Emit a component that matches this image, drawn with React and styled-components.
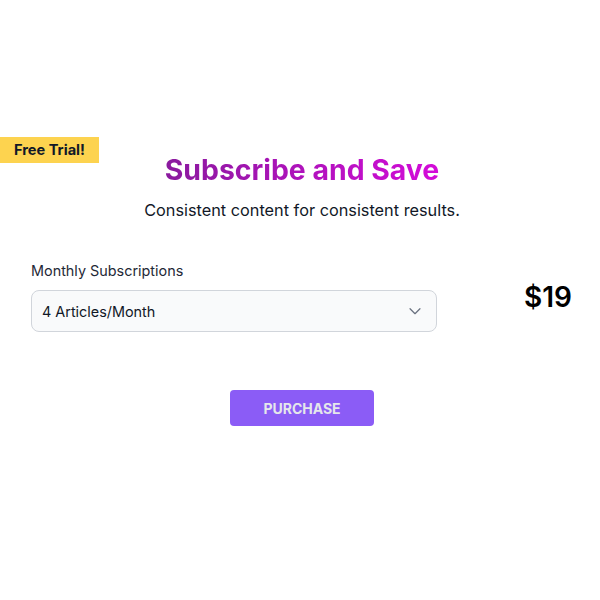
import styled, { createGlobalStyle } from "styled-components";

const GlobalStyle = createGlobalStyle`
  body {
    margin: 0;
    background: #ffffff;
    font-family: Inter, "Noto Sans", sans-serif;
  }
`;

const Page = styled.div`
  width: 600px;
  height: 600px;
  box-sizing: border-box;
  padding-top: 137px;
  position: relative;
`;

const Badge = styled.div`
  position: absolute;
  top: 137px;
  left: 0;
  width: 99px;
  height: 26px;
  background: #fdd34f;
  color: #111827;
  font-size: 14.6px;
  font-weight: 700;
  display: flex;
  align-items: center;
  justify-content: center;
`;

const Header = styled.div`
  display: flex;
  flex-direction: column;
  align-items: center;
  padding: 15px 0 0 4px;
`;

const Title = styled.h1`
  margin: 0;
  font-size: 28.4px;
  font-weight: 700;
  line-height: 36px;
  background: linear-gradient(90deg, #8a1a9e, #d40bd9);
  -webkit-background-clip: text;
  background-clip: text;
  color: transparent;
`;

const Subtitle = styled.p`
  margin: 10px 0 0;
  font-size: 16.3px;
  line-height: 24px;
  color: #111827;
`;

const Row = styled.div`
  display: flex;
  align-items: center;
  justify-content: space-between;
  padding: 0 28px 0 31px;
  margin-top: 39px;
`;

const Field = styled.div`
  width: 406px;
  display: flex;
  flex-direction: column;
`;

const Label = styled.label`
  font-size: 14.4px;
  line-height: 20px;
  color: #1f2937;
  margin-bottom: 9px;
`;

const Select = styled.div`
  height: 42px;
  box-sizing: border-box;
  border: 1px solid #d1d5db;
  border-radius: 8px;
  background: #f9fafb;
  display: flex;
  align-items: center;
  justify-content: space-between;
  padding: 0 12px 0 10px;
  font-size: 14.4px;
  color: #111827;
`;

const Price = styled.div`
  font-size: 28px;
  font-weight: 600;
  color: #000;
  margin-bottom: 0;
`;

const Actions = styled.div`
  display: flex;
  justify-content: center;
  padding-left: 4px;
  margin-top: 58px;
`;

const Button = styled.button`
  width: 144px;
  height: 36px;
  border: none;
  border-radius: 4px;
  background: #8b5cf6;
  color: #e5e7eb;
  font-family: inherit;
  font-size: 14px;
  font-weight: 700;
  cursor: pointer;
`;

const Chevron = () => (
  <svg width="18" height="18" viewBox="0 0 20 20" fill="none">
    <path d="M4.5 7.5l5.5 5.5 5.5-5.5" stroke="#6b7280" strokeWidth="1.4" strokeLinecap="round" strokeLinejoin="round" />
  </svg>
);

export default function App() {
  return (
    <Page>
      <GlobalStyle />
      <Badge>Free Trial!</Badge>
      <Header>
        <Title>Subscribe and Save</Title>
        <Subtitle>Consistent content for consistent results.</Subtitle>
      </Header>
      <Row>
        <Field>
          <Label>Monthly Subscriptions</Label>
          <Select>
            <span>4 Articles/Month</span>
            <Chevron />
          </Select>
        </Field>
        <Price>$19</Price>
      </Row>
      <Actions>
        <Button>PURCHASE</Button>
      </Actions>
    </Page>
  );
}
